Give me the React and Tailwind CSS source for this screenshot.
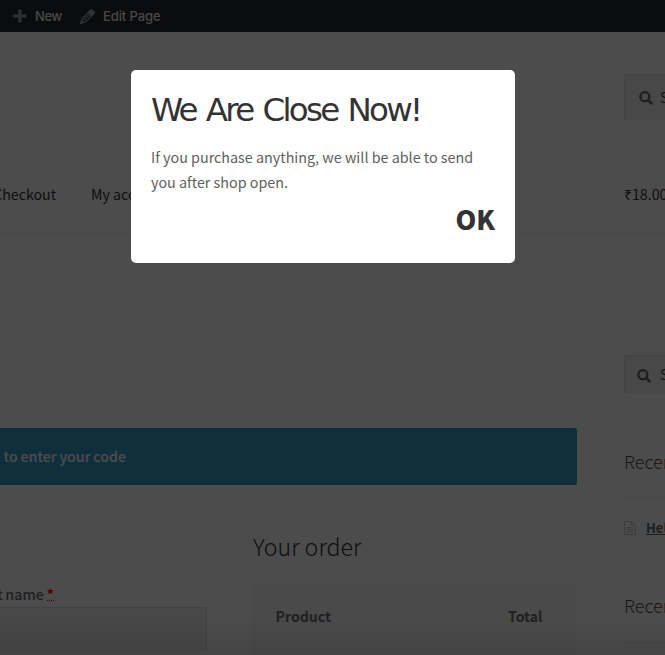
function AdminBar() {
  return (
    <div className="flex h-8 items-center bg-[#23282d] font-['Inter',sans-serif] text-[13px] font-medium leading-8 tracking-[-0.1px] text-[#eeeeee]">
      <svg className="ml-[13px] h-[14px] w-[14px] text-[#a0a5aa]" viewBox="0 0 14 14" fill="currentColor">
        <path d="M5.3 0.5h3v5h5v3h-5v5h-3v-5h-5v-3h5z" />
      </svg>
      <span className="ml-2 w-[28px] whitespace-nowrap tracking-[-0.4px]">New</span>
      <svg className="ml-[17px] h-[15px] w-[15px] text-[#a0a5aa]" viewBox="0 0 15 15" fill="none" stroke="currentColor" strokeWidth="1.3">
        <path d="M1 14l1.2-4.4 6-6 3.3 3.3-6 6z" />
        <path d="M8.8 2.8L10.7.9q.5-.4 1 0l2.4 2.4q.4.5 0 1l-1.9 1.9z" fill="currentColor" />
        <path d="M3.8 10.9l5.7-5.7M1 14l.6-2.4 1.8 1.8z" />
      </svg>
      <span className="ml-2 whitespace-nowrap">Edit Page</span>
    </div>
  );
}

function SearchIcon() {
  return (
    <svg className="h-[14px] w-[14px] shrink-0 text-[#60646c]" viewBox="0 0 14 14" fill="none" stroke="currentColor" strokeWidth="2.3">
      <circle cx="5.9" cy="5.7" r="4.5" />
      <path d="M9.2 9l3.3 3.3" strokeWidth="2.6" strokeLinecap="round" />
    </svg>
  );
}

function SiteHeader() {
  return (
    <header className="h-[202px] border-b border-[#f0f0f0]">
      <div className="flex h-[88px] pt-[42px]">
        <div className="ml-[624px] flex h-[46px] w-[220px] shrink-0 items-center border-l border-t border-[#e6e6e6] bg-[#f2f2f2] pl-[14px] text-[14px] text-[#43454b]">
          <SearchIcon />
          <span className="ml-[7px]">Search products…</span>
        </div>
      </div>
      <nav className="mt-[62px] flex h-6 whitespace-nowrap text-[14.2px] leading-6 text-[#333333]">
        <div className="flex w-14 shrink-0 justify-end">Checkout</div>
        <div className="ml-[35px] w-[533px] shrink-0">My account</div>
        <div>₹18.00</div>
      </nav>
    </header>
  );
}

function Checkout() {
  return (
    <main className="w-[577px] shrink-0 whitespace-nowrap">
      <div className="mt-[194px] flex h-[57px] items-center rounded-r-[2px] bg-[#369dc8] text-[14.2px] font-medium text-white">
        <div className="flex w-[126px] shrink-0 justify-end [word-spacing:-0.3px]">Click here to enter your code</div>
      </div>
      <div className="flex">
        <section className="w-[207px] shrink-0 pt-[97px]">
          <div className="flex h-[25px] w-[54px] justify-end text-[14.2px] font-medium leading-6 text-[#6d6d6d]">
            <span className="[word-spacing:-0.6px]">First name</span>
            <span className="ml-[3px] h-[19px] border-b border-dotted border-[#ff0000] font-bold text-[#ff0000]">*</span>
          </div>
          <div className="h-[44px] border-r border-t border-[#dddddd] bg-[#f0f0f0]" />
        </section>
        <section className="ml-[46px] w-[324px]">
          <h3 className="mt-[43px] h-9 text-[23.2px] font-light leading-9 text-[#333333]">Your order</h3>
          <div className="mt-5 flex h-[80px] bg-[#f8f8f8] pl-[22.5px] pt-5 text-[14.1px] font-bold leading-6 text-[#6d6d6d]">
            <span className="w-[232.5px]">Product</span>
            <span>Total</span>
          </div>
        </section>
      </div>
    </main>
  );
}

function Sidebar() {
  return (
    <aside className="ml-[47px] w-[220px] shrink-0 whitespace-nowrap pt-[121px]">
      <div className="flex h-[38px] items-center border-l border-t border-[#e6e6e6] bg-[#f2f2f2] pl-3 text-[14px] text-[#43454b]">
        <div className="pt-[3px]">
          <SearchIcon />
        </div>
        <span className="ml-[9px]">Search products…</span>
      </div>
      <h4 className="mt-[50px] h-[55px] border-b border-[#eeeeee] text-[18px] font-light leading-[36px] text-[#484c51]">Recent Posts</h4>
      <div className="mt-[18px] flex h-6 items-center text-[13px] font-bold text-[#60646c]">
        <svg className="h-[14px] w-3 text-[#c8c8c8]" viewBox="0 0 12 14" fill="none" stroke="currentColor">
          <path d="M.5.5h7l4 4v9H.5zM7.5.5v4h4M3 6.5h6M3 8.5h6M3 10.5h6" />
        </svg>
        <span className="ml-[10px] underline">Hello world!</span>
      </div>
      <h4 className="mt-[47px] h-[56px] border-b border-[#eeeeee] text-[18px] font-light leading-[36px] text-[#484c51]">Recent Comments</h4>
    </aside>
  );
}

function ClosedDialog() {
  return (
    <div className="absolute left-[131px] top-[70px] h-[193px] w-[384px] rounded-[5px] bg-white px-5 pt-5">
      <h2 className="h-[40px] whitespace-nowrap font-['DejaVu_Sans',sans-serif] text-[32.5px] leading-[40px] tracking-[-2.7px] text-[#333333] [word-spacing:2.3px]">
        We Are Close Now!
      </h2>
      <p className="mt-[14px] whitespace-nowrap text-[14.33px] leading-[25px] text-[#606060]">
        If you purchase anything, we will be able to send
        <br />
        you after shop open.
      </p>
      <div className="flex justify-end">
        <button className="h-[50px] text-[26.5px] font-black leading-[50px] text-[#333333]">OK</button>
      </div>
    </div>
  );
}

export default function App() {
  return (
    <div className="relative h-[655px] w-full overflow-hidden bg-white font-['Noto_Sans_CJK_SC',sans-serif]">
      <AdminBar />
      <SiteHeader />
      <div className="flex">
        <Checkout />
        <Sidebar />
      </div>
      <div className="absolute inset-0 bg-black/70" />
      <div className="absolute inset-x-0 bottom-0 h-10 bg-linear-to-b from-transparent to-black/10" />
      <ClosedDialog />
    </div>
  );
}
